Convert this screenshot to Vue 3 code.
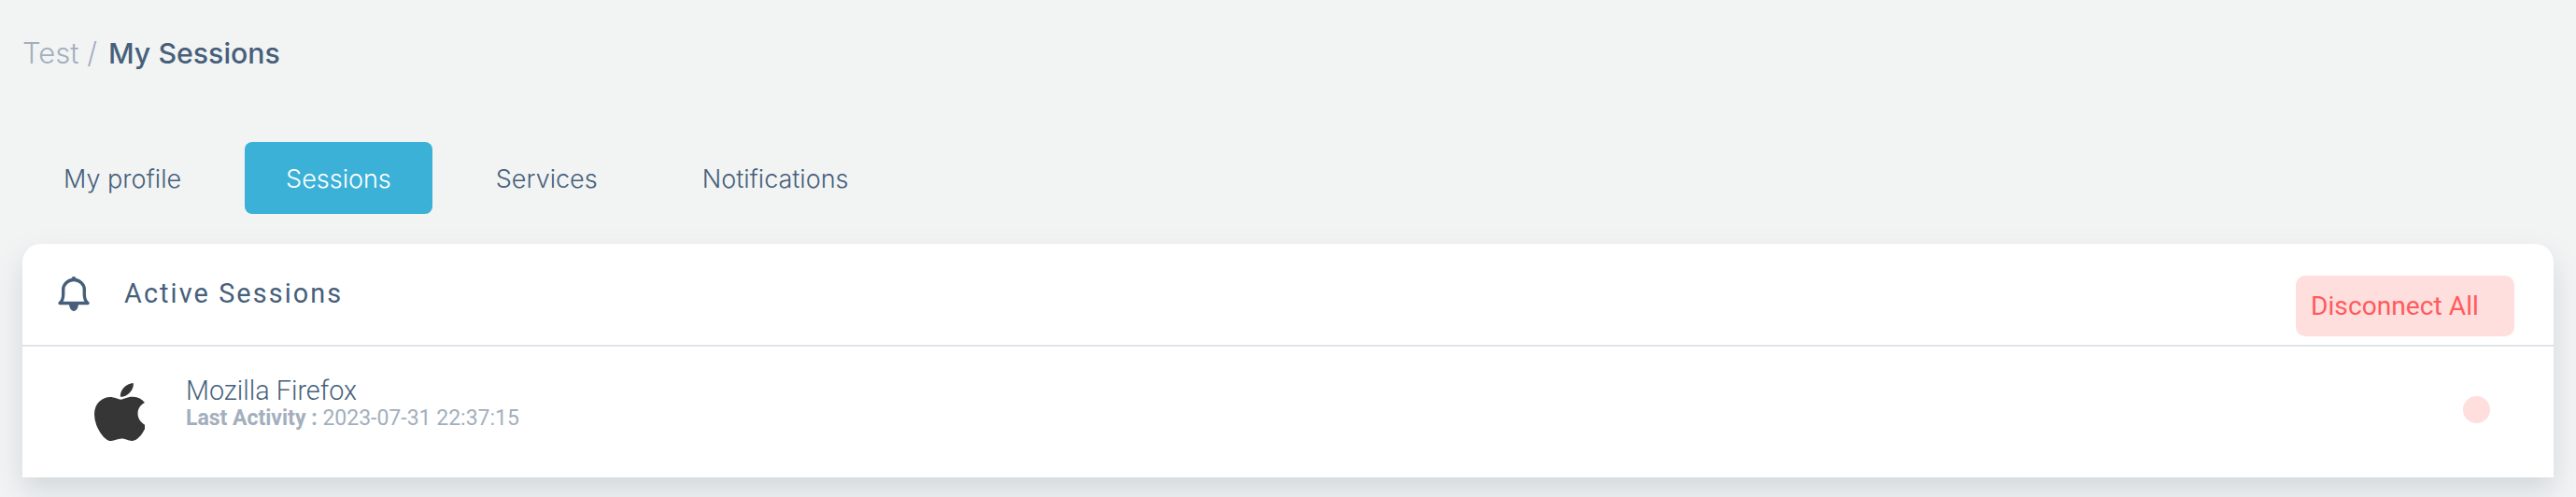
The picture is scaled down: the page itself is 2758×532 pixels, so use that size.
<template>
  <div class="page">
    <div class="crumbs">
      <span class="crumb-root">Test /</span>
      <span class="crumb-current">My Sessions</span>
    </div>

    <nav class="tabs">
      <a
        v-for="tab in tabs"
        :key="tab"
        class="tab"
        :class="{ active: tab === activeTab }"
      >{{ tab }}</a>
    </nav>

    <section class="card">
      <header class="card-head">
        <svg class="bell" viewBox="0 0 34 37" fill="none">
          <path d="M2 28.500c2.500-2 3.700-5 3.700-9.500v-5C5.700 8 11 3.500 17 3.500S28.300 8 28.300 14v5c0 4.500 1.200 7.500 3.700 9.500z" stroke="#475f7b" stroke-width="3.400" stroke-linejoin="round" />
          <circle cx="17" cy="2.500" r="2.500" fill="#475f7b" />
          <path d="M12 29h10c0 4-2 8-5 8s-5-4-5-8z" fill="#475f7b" />
        </svg>
        <h2 class="card-title">Active Sessions</h2>
        <button class="disconnect">Disconnect All</button>
      </header>

      <div class="session">
        <svg class="apple" viewBox="4 32 365 448" preserveAspectRatio="none">
          <path fill="#363636" d="M318.700 268.700c-.2-36.700 16.400-64.400 50-84.800-18.800-26.900-47.200-41.700-84.700-44.600-35.500-2.800-74.300 20.700-88.500 20.700-15 0-49.400-19.700-76.400-19.700C63.300 141.200 4 184.800 4 273.500q0 39.300 14.400 81.200c12.800 36.700 59 126.700 107.200 125.200 25.200-.6 43-17.900 75.800-17.900 31.800 0 48.300 17.900 76.400 17.900 48.600-.7 90.400-82.500 102.600-119.300-65.200-30.700-61.700-90-61.700-91.900zm-56.600-164.200c27.300-32.400 24.800-61.900 24-72.500-24.100 1.400-52 16.400-67.900 34.900-17.500 19.800-27.800 44.300-25.600 71.900 26.100 2 49.900-11.400 69.500-34.300z" />
        </svg>
        <div class="session-info">
          <div class="session-name">Mozilla Firefox</div>
          <div class="session-meta"><b>Last Activity :</b> 2023-07-31 22:37:15</div>
        </div>
        <span class="status-dot"></span>
      </div>
    </section>
  </div>
</template>

<script setup>
const tabs = ['My profile', 'Sessions', 'Services', 'Notifications']
const activeTab = 'Sessions'
</script>

<style>
html,
body {
  margin: 0;
  background: #f2f4f4;
}
</style>

<style scoped>
.page {
  height: 532px;
  box-sizing: border-box;
  padding: 0 24px;
  overflow: hidden;
  font-family: Roboto, "Liberation Sans", sans-serif;
  color: #475f7b;
  background: #f2f4f4;
}

.crumbs {
  display: flex;
  gap: 12px;
  height: 152px;
  padding-top: 37px;
  box-sizing: border-box;
  font-family: Inter, sans-serif;
  font-size: 31px;
  line-height: 40px;
}

.crumb-root {
  color: #a3afbd;
  font-weight: 300;
}

.crumb-current {
  font-size: 30.300px;
  font-weight: 500;
}

.tabs {
  display: flex;
  gap: 24px;
  margin-bottom: 32px;
}

.tab {
  height: 77px;
  padding: 0 44px;
  border-radius: 8px;
  font-family: Inter, sans-serif;
  font-size: 27px;
  font-weight: 300;
  line-height: 79px;
}

.tab.active {
  background: #3bb1d8;
  color: #fff;
}

.card {
  height: 250px;
  background: #fff;
  border-radius: 20px 20px 0 0;
  box-shadow: 0 14px 30px rgba(100, 115, 130, 0.22);
}

.card-head {
  display: flex;
  align-items: flex-start;
  box-sizing: border-box;
  height: 110px;
  padding: 35px 42px 0 38px;
  border-bottom: 2px solid #dfe3e7;
}

.bell {
  width: 34px;
  height: 37px;
  flex: none;
}

.card-title {
  margin: 1px 0 0 37px;
  font-size: 28.800px;
  font-weight: 450;
  letter-spacing: 2.100px;
  line-height: 34px;
}

.disconnect {
  margin-left: auto;
  margin-top: -1px;
  width: 234px;
  height: 65px;
  padding: 0 0 0 16px;
  border: 0;
  border-radius: 10px;
  background: #ffdede;
  color: #ff5b5c;
  font: 400 28.200px Roboto, sans-serif;
  text-align: left;
}

.session {
  display: flex;
  align-items: center;
  height: 140px;
  padding: 0 68px 0 77px;
}

.apple {
  width: 54px;
  height: 62px;
  flex: none;
}

.session-info {
  margin-left: 44px;
  margin-bottom: 19px;
}

.session-name {
  margin-bottom: 1px;
  font-size: 28.800px;
  font-weight: 300;
  line-height: 32px;
}

.session-meta {
  font-size: 23px;
  color: #a3afbd;
  line-height: 26px;
}

.session-meta b {
  font-weight: 700;
}

.status-dot {
  margin-left: auto;
  margin-bottom: 6px;
  width: 29px;
  height: 29px;
  border-radius: 50%;
  background: #ffdede;
}
</style>
